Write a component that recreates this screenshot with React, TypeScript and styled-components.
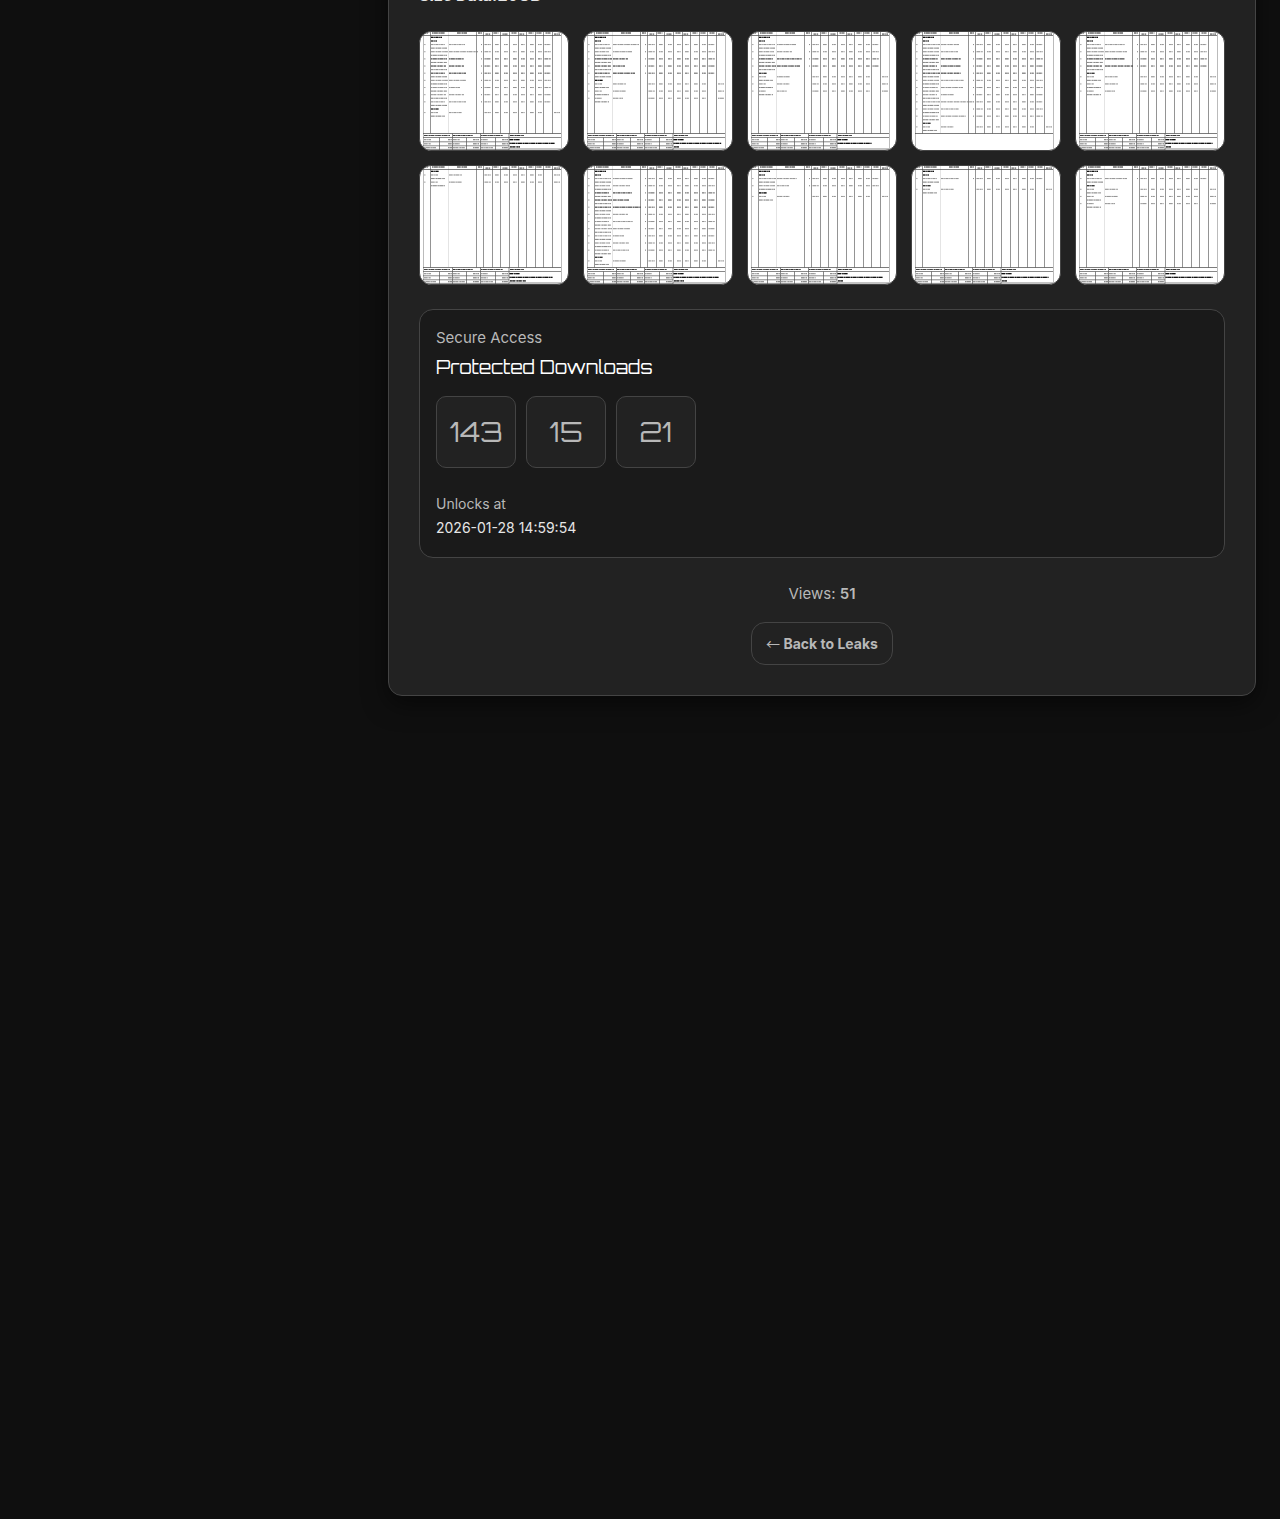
import React from "react";
import styled, { createGlobalStyle } from "styled-components";

const GlobalStyle = createGlobalStyle`
  *, *::before, *::after { box-sizing: border-box; }
  body {
    margin: 0;
    min-height: 100vh;
    background: #0f0f0f;
    color: #b8b8b8;
    font: 400 15px/24px Inter, "Liberation Sans", sans-serif;
  }
`;

const displayFont = `Orbitron, "DejaVu Sans", sans-serif`;

const Page = styled.div`
  display: flow-root;
  overflow-x: hidden;
`;

const Card = styled.main`
  margin: -48px 24px 48px 388px;
  padding: 30px;
  background: #222;
  border: 1px solid #444;
  border-radius: 14px;
  box-shadow: 0 8px 24px rgba(0, 0, 0, 0.5);
`;

const SizeLine = styled.p`
  margin: 0 0 24px;
  color: #e6e6e6;
  font-size: 16px;
  font-weight: 700;
`;

const Gallery = styled.div`
  display: grid;
  grid-template-columns: repeat(5, 1fr);
  gap: 14px;
  margin-bottom: 24px;
`;

const Thumb = styled.a`
  display: block;
  height: 120px;
  overflow: hidden;
  background: #fff;
  border: 1px solid #444;
  border-radius: 12px;

  svg {
    display: block;
    width: 100%;
    height: 100%;
  }
`;

const Panel = styled.section`
  padding: 16px 16px 17px;
  background: #1a1a1a;
  border: 1px solid #444;
  border-radius: 14px;
`;

const PanelLabel = styled.p`
  margin: 0 0 4px;
`;

const PanelTitle = styled.h2`
  margin: 0 0 16px;
  color: #fff;
  font: 400 18px/26px ${displayFont};
`;

const Countdown = styled.div`
  display: flex;
  flex-wrap: wrap;
  gap: 10px;
  margin-bottom: 24px;
`;

const CountBox = styled.div`
  display: grid;
  place-items: center;
  width: 80px;
  height: 72px;
  background: #222;
  border: 1px solid #444;
  border-radius: 10px;
  font: 400 27px/36px ${displayFont};
`;

const Unlock = styled.p<{ $bright?: boolean }>`
  margin: 0;
  font-size: 14px;
  color: ${(p) => (p.$bright ? "#e6e6e6" : "#b8b8b8")};
`;

const Footer = styled.footer`
  display: flex;
  flex-direction: column;
  align-items: center;
  gap: 16px;
  margin-top: 24px;
`;

const Views = styled.p`
  margin: 0;

  strong { font-weight: 600; }
`;

const BackLink = styled.a`
  padding: 10px 14px 9px;
  border: 1px solid #444;
  border-radius: 14px;
  color: #b8b8b8;
  font-size: 14px;
  font-weight: 700;
  line-height: 22px;
  text-decoration: none;
`;

const Arrow = styled.span`
  font-family: "Noto Sans CJK JP", sans-serif;
  font-weight: 400;
  line-height: 1;
`;

type Sheet = { parts: number[]; labour: number; total?: boolean; note: number; wrap?: number };

/* parts: description width of each parts row; labour: number of labour rows */
const sheets: Sheet[] = [
  { parts: [16, 29, 15, 15, 17, 17, 11, 15, 17], labour: 1, note: 45, wrap: 10 },
  { parts: [26, 19, 15, 12, 22], labour: 3, note: 48, wrap: 5 },
  { parts: [19, 15, 25, 23], labour: 3, note: 34 },
  { parts: [18, 17, 20, 20, 20, 23, 22, 13, 32, 18, 25], labour: 1, total: false, note: 0 },
  { parts: [20, 22, 20, 28], labour: 3, note: 47, wrap: 5 },
  { parts: [], labour: 2, note: 43, wrap: 16 },
  { parts: [20, 17, 19, 16, 28, 15, 20, 17, 11, 16, 16], labour: 1, note: 45, wrap: 10 },
  { parts: [20, 12], labour: 1, note: 45, wrap: 5 },
  { parts: [18], labour: 1, note: 47, wrap: 5 },
  { parts: [22], labour: 3, note: 47 },
];

const columns = [11.5, 57.5, 64.5, 73.5, 81.5, 90.5, 99.5, 107.5, 116.5, 124.5, 133.5];
const numeric = [73, 81, 90, 99, 107, 116, 124, 133];
const patterns = ["2.4 .9 1.2 .5", "3.6 1.1 1.5 .4", "1.3 .5 4 .8", "1.9 .4 2.9 1.3"];

function Ink({ x, y, w, seed = 0, weight = 0.8, tone = "#444" }: {
  x: number; y: number; w: number; seed?: number; weight?: number; tone?: string;
}) {
  return (
    <g stroke={tone} strokeWidth={weight}>
      <path d={`M${x} ${y}h${w}`} strokeOpacity=".4" />
      <path d={`M${x} ${y}h${w}`} strokeDasharray={patterns[seed % patterns.length]} />
    </g>
  );
}

function Invoice({ sheet, index }: { sheet: Sheet; index: number }) {
  const lines: React.ReactNode[] = [];
  let slot = 0;
  const nextY = () => 5.9 + 3.58 * slot++;

  const heading = (w: number) => {
    const y = nextY();
    lines.push(<Ink key={`h${y}`} x={12} y={y} w={w} weight={1.1} tone="#111" />);
  };
  const row = (desc: number, labour: boolean, n: number) => {
    const y = nextY();
    const bold = !labour && n > 1 && n < 5;
    const tone = bold ? "#333" : "#777";
    const weight = bold ? 0.9 : 0.7;
    lines.push(
      <g key={`r${y}`}>
        <Ink x={5} y={y} w={1.5} weight={0.6} tone="#888" />
        <Ink x={12} y={y} w={labour ? 7 : 14 + ((n * 3 + index) % 4)} seed={n} weight={weight} tone={tone} />
        <Ink x={30} y={y} w={desc} seed={n + index} weight={weight} tone={tone} />
        {!labour && <Ink x={62} y={y} w={1} weight={0.8} tone="#777" />}
        {numeric.map((edge, i) =>
          labour && i === 7 ? null : (
            <Ink
              key={edge}
              x={edge - (i === 0 || i === 7 ? 7.5 : 5)}
              y={y}
              w={i === 0 || i === 7 ? 6.2 : 3.8}
              seed={i + n}
              weight={0.7}
              tone={bold ? "#444" : "#777"}
            />
          )
        )}
        {labour && <Ink x={135} y={y} w={6} seed={n} weight={0.7} tone={tone} />}
      </g>
    );
    const sub = nextY();
    lines.push(<Ink key={`s${sub}`} x={12} y={sub} w={labour ? 14 : 16} seed={n + 1} weight={0.7} tone="#666" />);
  };

  if (sheet.parts.length) {
    heading(11);
    heading(6);
    sheet.parts.forEach((w, n) => row(w, false, n));
  }
  heading(8);
  for (let n = 0; n < sheet.labour; n++) row(n === 2 ? 10 : 13, true, n);

  const hasTotal = sheet.total !== false;

  return (
    <svg viewBox="1 0.5 148 118" preserveAspectRatio="none" fill="none" aria-hidden="true">
      <path d="M29.5 0V101.5" stroke="#ddd" strokeWidth=".8" />
      <path d="M4.5 0V118M142.5 0V118" stroke="#aaa" strokeWidth=".8" />
      <path
        d={columns.map((x) => `M${x} 0V102`).join("")}
        stroke="#666"
        strokeWidth=".7"
      />
      <path d="M4 4H142M4 102H142" stroke="#444" strokeWidth=".7" />
      <Ink x={5} y={1.5} w={4} weight={1} />
      <Ink x={13} y={1.5} w={13} seed={2} weight={1} />
      <Ink x={38} y={1.5} w={10} seed={1} weight={1} />
      <Ink x={59} y={1.5} w={4} weight={1} />
      {numeric.map((edge, i) => (
        <Ink key={edge} x={edge - 6.5} y={i % 2 || i === 6 ? 1.5 : 2.6} w={5} seed={i} weight={0.9} />
      ))}
      <Ink x={135} y={2.6} w={6} weight={0.9} />
      {lines}
      {hasTotal && (
        <g>
          <path
            d="M4 106H142M4 110.3H90M4 114.3H90M4 117.9H90M90 117.5H142M20.5 106V119M33.5 102V119M47.5 106V119M61.5 102V119M76.5 106V119M90 102V119"
            stroke="#555"
            strokeWidth=".7"
          />
          <Ink x={5} y={104} w={26} seed={1} weight={1.1} />
          <Ink x={34} y={104} w={20} seed={0} weight={1.1} tone="#333" />
          <Ink x={62} y={104} w={22} seed={2} weight={1.1} />
          <Ink x={91} y={104} w={14} seed={1} weight={1.1} tone="#333" />
          {[108.2, 112.3, 116.2].map((y, r) => (
            <g key={y}>
              {[5, 34, 62].map((x, c) => (
                <g key={x}>
                  <Ink x={x} y={y} w={r === 2 ? 12 : 7} seed={r + c} tone="#777" />
                  <Ink x={[29, 54, 83][c]} y={y} w={c === 0 ? 4 : 6} seed={r} tone="#666" />
                </g>
              ))}
            </g>
          ))}
          <Ink x={90.5} y={108.2} w={10} seed={1} weight={1.3} tone="#111" />
          <Ink x={90.5} y={111.8} w={sheet.note} seed={2} weight={1.2} tone="#111" />
          {sheet.wrap && <Ink x={91} y={115.4} w={sheet.wrap} seed={3} weight={1.1} tone="#222" />}
        </g>
      )}
    </svg>
  );
}

export default function App() {
  return (
    <Page>
      <GlobalStyle />
      <Card>
        <SizeLine>Size Data:20GB</SizeLine>
        <Gallery>
          {sheets.map((sheet, i) => (
            <Thumb key={i} href="#" aria-label={`Document ${i + 1}`}>
              <Invoice sheet={sheet} index={i} />
            </Thumb>
          ))}
        </Gallery>
        <Panel>
          <PanelLabel>Secure Access</PanelLabel>
          <PanelTitle>Protected Downloads</PanelTitle>
          <Countdown>
            <CountBox>143</CountBox>
            <CountBox>15</CountBox>
            <CountBox>21</CountBox>
          </Countdown>
          <Unlock>Unlocks at</Unlock>
          <Unlock $bright>2026-01-28 14:59:54</Unlock>
        </Panel>
        <Footer>
          <Views>
            Views: <strong>51</strong>
          </Views>
          <BackLink href="#">
            <Arrow>←</Arrow> Back to Leaks
          </BackLink>
        </Footer>
      </Card>
    </Page>
  );
}
